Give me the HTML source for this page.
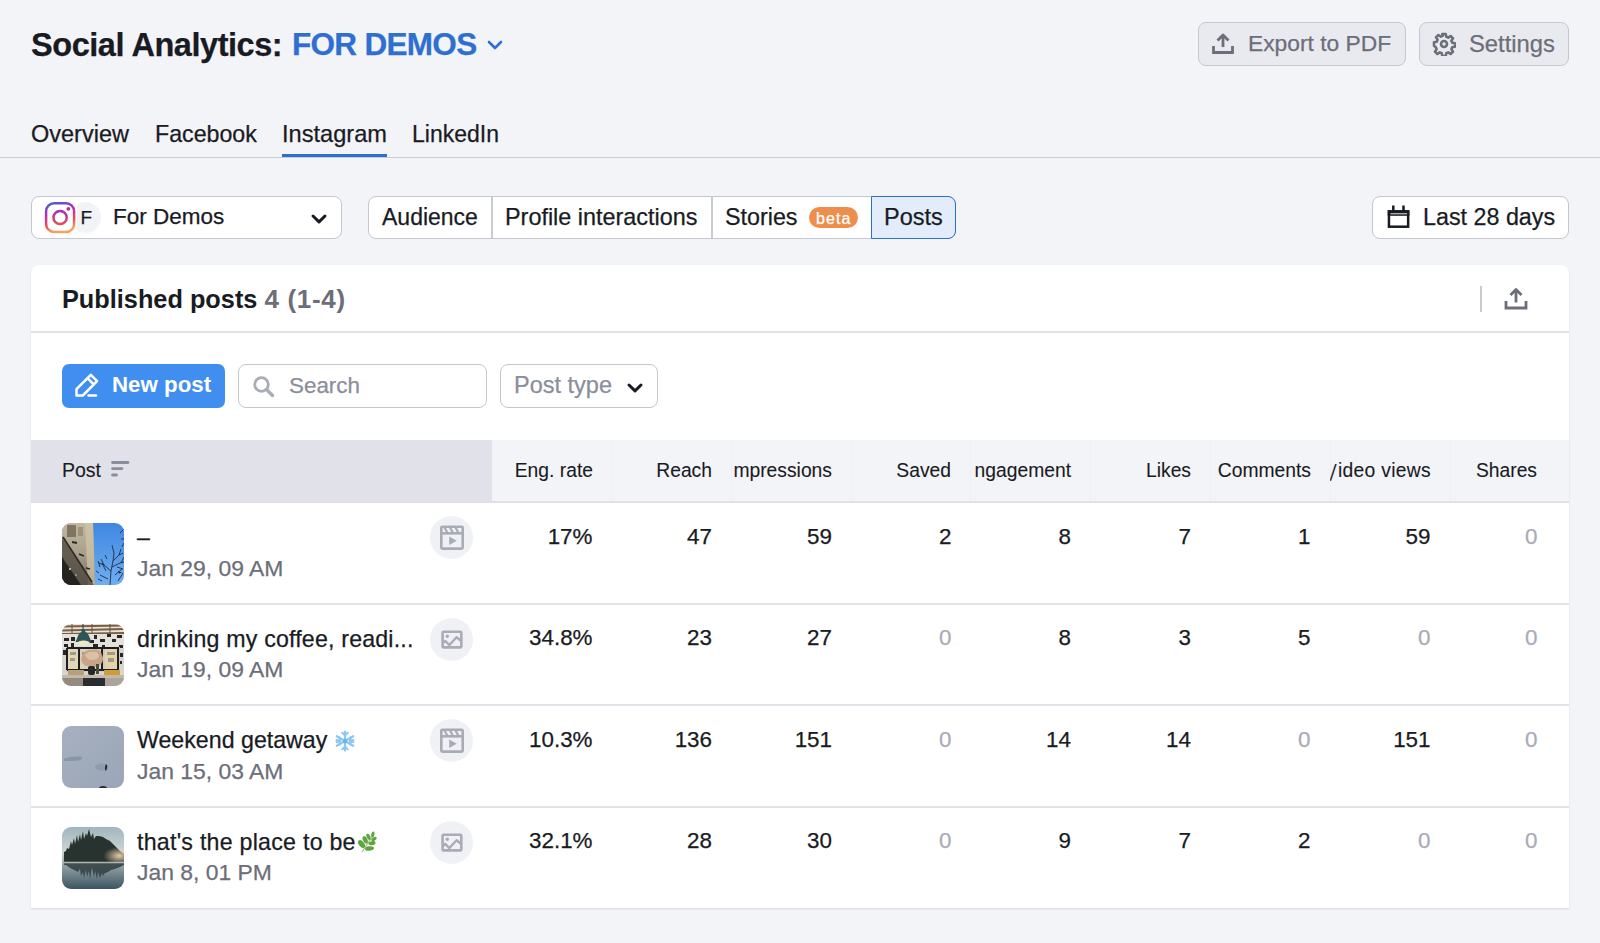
<!DOCTYPE html>
<html><head><meta charset="utf-8">
<style>
*{box-sizing:border-box;margin:0;padding:0}
html,body{width:1600px;height:943px;overflow:hidden}
body{background:#f3f4f8;font-family:"Liberation Sans",sans-serif;color:#191b23;position:relative;-webkit-text-stroke:.25px currentColor}
.abs{position:absolute}
.t{position:absolute;white-space:nowrap;line-height:1}
.btn{position:absolute;border:1.5px solid #c4c7cf;border-radius:8px;background:#fff}
.gray{color:#6c6e79}
.light{color:#a9abb6}
.hdrline{position:absolute;left:0;top:156.5px;width:1600px;height:1.5px;background:#c9cbd3}
.card{position:absolute;left:31px;top:265px;width:1538px;height:643px;background:#fff;border-radius:8px 8px 0 0;box-shadow:0 1px 2px rgba(25,27,35,.12)}
.rowline{position:absolute;left:0;width:1538px;height:2px;background:#e3e4ea}
.num{position:absolute;font-size:22.5px;line-height:1;text-align:right;white-space:nowrap}
.hcell{position:absolute;top:0;height:62px;overflow:hidden;display:flex;justify-content:flex-end;align-items:center;font-size:19.3px;white-space:nowrap;padding-top:0;-webkit-text-stroke:.1px currentColor}
.thumb{position:absolute;left:31px;width:62px;height:62px;border-radius:9px;overflow:hidden}
.ticon{position:absolute;left:399px;width:43px;height:43px;border-radius:50%;background:#f0f1f5}
</style></head><body>

<!-- Header -->
<div class="t" style="left:31px;top:28.5px;font-size:32.5px;font-weight:700;letter-spacing:-.45px">Social Analytics:</div>
<div class="t" style="left:292px;top:28.5px;font-size:31.5px;font-weight:700;color:#2f6fd0;letter-spacing:-.7px">FOR DEMOS</div>
<svg class="abs" style="left:486px;top:38px" width="18" height="14" viewBox="0 0 18 14"><path d="M3 4l6 6 6-6" fill="none" stroke="#2f6fd0" stroke-width="2.6" stroke-linecap="round" stroke-linejoin="round"/></svg>

<div class="btn" style="left:1198px;top:22px;width:208px;height:44px;background:#e9eaef;border-color:#c4c7cf"></div>
<svg class="abs" style="left:1211px;top:33px" width="24" height="22" viewBox="0 0 24 22"><path d="M12 2v12M6.5 7.5L12 2l5.5 5.5" fill="none" stroke="#6c6e79" stroke-width="2.8" stroke-linejoin="round"/><path d="M2.5 13v6.5h19V13" fill="none" stroke="#6c6e79" stroke-width="2.8"/></svg>
<div class="t gray" style="left:1248px;top:32px;font-size:22.8px">Export to PDF</div>

<div class="btn" style="left:1419px;top:22px;width:150px;height:44px;background:#e9eaef;border-color:#c4c7cf"></div>
<svg class="abs" style="left:1432px;top:32px" width="24" height="24" viewBox="0 0 24 24"><path d="M10.3 2h3.4l.6 2.8 1.9.8 2.4-1.6 2.4 2.4-1.6 2.4.8 1.9 2.8.6v3.4l-2.8.6-.8 1.9 1.6 2.4-2.4 2.4-2.4-1.6-1.9.8-.6 2.8h-3.4l-.6-2.8-1.9-.8-2.4 1.6-2.4-2.4 1.6-2.4-.8-1.9L2 13.7v-3.4l2.8-.6.8-1.9L4 5.4 6.4 3l2.4 1.6 1.9-.8z" fill="none" stroke="#6c6e79" stroke-width="2.6" stroke-linejoin="round"/><circle cx="12" cy="12" r="3" fill="none" stroke="#6c6e79" stroke-width="2.6"/></svg>
<div class="t gray" style="left:1469px;top:32px;font-size:23.8px">Settings</div>

<!-- Tabs -->
<div class="t" style="left:31px;top:123px;font-size:23.5px">Overview</div>
<div class="t" style="left:155px;top:123px;font-size:23.2px">Facebook</div>
<div class="t" style="left:282px;top:123px;font-size:23.6px">Instagram</div>
<div class="t" style="left:412px;top:123px;font-size:23px">LinkedIn</div>
<div class="abs" style="left:282px;top:153.5px;width:105px;height:4px;background:#2b6fcf"></div>
<div class="hdrline"></div>

<!-- Filter row -->
<div class="btn" style="left:31px;top:196px;width:311px;height:43px"></div>
<div class="abs" style="left:69.5px;top:202px;width:31px;height:31px;border-radius:50%;background:#f2f3f7"></div>
<svg class="abs" style="left:43px;top:200px" width="34" height="36" viewBox="0 0 34 36"><defs><linearGradient id="ig" x1=".35" y1="1" x2=".1" y2="0"><stop offset="0" stop-color="#f5a25a"/><stop offset=".3" stop-color="#e4485e"/><stop offset=".65" stop-color="#b42fb8"/><stop offset="1" stop-color="#4d5ad6"/></linearGradient><linearGradient id="ig2" x1="0" y1="1" x2="0" y2="0"><stop offset="0" stop-color="#e24a58"/><stop offset="1" stop-color="#a62ec0"/></linearGradient></defs><rect x="0" y="0" width="34" height="36" fill="#fff"/><rect x="3.1" y="3.3" width="28" height="28.6" rx="8" fill="none" stroke="url(#ig)" stroke-width="2.5"/><circle cx="17.1" cy="17.5" r="6.6" fill="none" stroke="url(#ig2)" stroke-width="2.5"/><circle cx="25.4" cy="8.8" r="1.9" fill="#a42fbf"/></svg>
<div class="t" style="left:80.5px;top:207.5px;font-size:19px;color:#191b23">F</div>
<div class="t" style="left:113px;top:206px;font-size:22.5px">For Demos</div>
<svg class="abs" style="left:309px;top:211px" width="20" height="14" viewBox="0 0 20 14"><path d="M4 5l6 5.8L16 5" fill="none" stroke="#191b23" stroke-width="3" stroke-linecap="round" stroke-linejoin="round"/></svg>

<div class="btn" style="left:368px;top:196px;width:588px;height:43px"></div>
<div class="abs" style="left:491px;top:197px;width:1.5px;height:41px;background:#c9cbd2"></div>
<div class="abs" style="left:711px;top:197px;width:1.5px;height:41px;background:#c9cbd2"></div>
<div class="abs" style="left:871px;top:196px;width:85px;height:43px;background:#e3ecfb;border:1.5px solid #2b6fcf;border-radius:0 8px 8px 0"></div>
<div class="t" style="left:382px;top:206px;font-size:23px">Audience</div>
<div class="t" style="left:505px;top:206px;font-size:23.4px">Profile interactions</div>
<div class="t" style="left:725px;top:206px;font-size:23.3px">Stories</div>
<div class="abs" style="left:809px;top:207px;width:49px;height:21px;border-radius:10.5px;background:#ee8e4c"></div>
<div class="t" style="left:816px;top:210.5px;font-size:16px;color:#fff;letter-spacing:1.1px">beta</div>
<div class="t" style="left:884px;top:206px;font-size:23.5px">Posts</div>

<div class="btn" style="left:1372px;top:196px;width:197px;height:43px"></div>
<svg class="abs" style="left:1386px;top:204px" width="26" height="26" viewBox="0 0 26 26"><path d="M2.95 8h19.2v19" fill="none"/><rect x="2.95" y="7.45" width="19.2" height="15.25" fill="none" stroke="#191b23" stroke-width="2.5"/><rect x="1.7" y="6.2" width="21.7" height="5.6" fill="#191b23"/><path d="M4.5 9.8h16.6" stroke="#fff" stroke-width=".9"/><path d="M7.3 1.5v6M17.5 1.5v6" stroke="#191b23" stroke-width="2.5"/></svg>
<div class="t" style="left:1423px;top:206px;font-size:23.3px">Last 28 days</div>

<!-- Card -->
<div class="card">
  <div class="t" style="left:31px;top:21px;font-size:25.3px;font-weight:700;-webkit-text-stroke:0">Published posts <span style="color:#6c6e79;font-size:26px;letter-spacing:.7px">4 (1-4)</span></div>
  <div class="abs" style="left:1449px;top:21px;width:2px;height:26px;background:#c9cbd2"></div>
  <svg class="abs" style="left:1472px;top:22px" width="26" height="24" viewBox="0 0 26 24"><path d="M13 2.5v13M7.5 8L13 2.5 18.5 8" fill="none" stroke="#6c6e79" stroke-width="2.8" stroke-linejoin="round"/><path d="M3 14v7h20v-7" fill="none" stroke="#6c6e79" stroke-width="2.8"/></svg>
  <div class="rowline" style="top:66px;height:1.5px;background:#e0e1e8"></div>

  <!-- toolbar -->
  <div class="abs" style="left:31px;top:99px;width:163px;height:44px;border-radius:7px;background:#408ef0"></div>
  <svg class="abs" style="left:43px;top:106px" width="28" height="28" viewBox="0 0 28 28"><path d="M2.5 24.5v-6.3L16.8 3.9l6.3 6.3L8.8 24.5z" fill="none" stroke="#fff" stroke-width="2.5" stroke-linejoin="round"/><path d="M13.5 7.2l6.3 6.3" stroke="#fff" stroke-width="2.5"/><path d="M14.5 24.5h7.5" stroke="#fff" stroke-width="2.5" stroke-linecap="round"/></svg>
  <div class="t" style="left:81px;top:109px;font-size:22.3px;font-weight:700;color:#fff;-webkit-text-stroke:0">New post</div>

  <div class="btn" style="left:207px;top:99px;width:249px;height:44px"></div>
  <svg class="abs" style="left:220px;top:109px" width="26" height="26" viewBox="0 0 26 26"><circle cx="10.5" cy="10.5" r="6.8" fill="none" stroke="#a9abb6" stroke-width="2.8"/><path d="M15.5 15.5l6 6" stroke="#a9abb6" stroke-width="3.2" stroke-linecap="round"/></svg>
  <div class="t light" style="left:258px;top:110px;font-size:22.4px;color:#8a8e9b">Search</div>

  <div class="btn" style="left:469px;top:99px;width:158px;height:44px"></div>
  <div class="t" style="left:483px;top:109px;font-size:23.5px;color:#8a8e9b">Post type</div>
  <svg class="abs" style="left:594px;top:115px" width="20" height="14" viewBox="0 0 20 14"><path d="M4 5l6 5.8L16 5" fill="none" stroke="#191b23" stroke-width="3" stroke-linecap="round" stroke-linejoin="round"/></svg>

  <!-- table header -->
  <div class="abs" style="left:0;top:175px;width:1538px;height:62px;background:#f3f4f8">
    <div class="abs" style="left:0;top:0;width:461px;height:62px;background:#e1e2e9"></div>
    <div class="t" style="left:31px;top:21px;font-size:19.5px;-webkit-text-stroke:.1px currentColor">Post</div>
    <svg class="abs" style="left:78px;top:19px" width="22" height="20" viewBox="0 0 22 20"><path d="M3.5 3.5h15.5M3.5 9.6h9.5M3.5 16h4" stroke="#8a8e9b" stroke-width="2.8" stroke-linecap="round"/></svg>
    <div class="abs" style="left:581px;top:0;width:1px;height:61px;background:#eef0f3"></div><div class="abs" style="left:700px;top:0;width:1px;height:61px;background:#eef0f3"></div><div class="abs" style="left:820px;top:0;width:1px;height:61px;background:#eef0f3"></div><div class="abs" style="left:939px;top:0;width:1px;height:61px;background:#eef0f3"></div><div class="abs" style="left:1059px;top:0;width:1px;height:61px;background:#eef0f3"></div><div class="abs" style="left:1179px;top:0;width:1px;height:61px;background:#eef0f3"></div><div class="abs" style="left:1299px;top:0;width:1px;height:61px;background:#eef0f3"></div><div class="abs" style="left:1419px;top:0;width:1px;height:61px;background:#eef0f3"></div>
    <div class="hcell" style="left:461px;width:120px;padding-right:19px">Eng. rate</div>
    <div class="hcell" style="left:581px;width:119px;padding-right:19px">Reach</div>
    <div class="hcell" style="left:700px;width:120px;padding-right:19px">mpressions</div>
    <div class="hcell" style="left:820px;width:119px;padding-right:19px">Saved</div>
    <div class="hcell" style="left:939px;width:120px;padding-right:19px">ngagement</div>
    <div class="hcell" style="left:1059px;width:120px;padding-right:19px">Likes</div>
    <div class="hcell" style="left:1179px;width:120px;padding-right:19px">Comments</div>
    <div class="hcell" style="left:1299px;width:120px;padding-right:19px;letter-spacing:.3px"><span style="display:inline-block;transform:skewX(-18deg);font-size:18px;margin-right:2px">|</span>ideo views</div>
    <div class="hcell" style="left:1419px;width:119px;padding-right:32px">Shares</div>
    <div class="rowline" style="top:61px;height:1.5px;background:#e0e1e8"></div>
  </div>

  <!-- rows -->
  <div id="rows">
<div class="abs" style="left:0;top:238px;width:1538px;height:101.5px">
<div class="thumb" style="top:19.5px"><svg width="62" height="62" viewBox="0 0 62 62">
<defs><linearGradient id="sky1" x1="0" y1="0" x2="0" y2="1"><stop offset="0" stop-color="#3f87e2"/><stop offset="1" stop-color="#70aef0"/></linearGradient>
<linearGradient id="bld1" x1="0" y1="0" x2="0" y2="1"><stop offset="0" stop-color="#c2b8a6"/><stop offset=".5" stop-color="#a89e8c"/><stop offset="1" stop-color="#6f685c"/></linearGradient></defs>
<rect width="62" height="62" fill="url(#sky1)"/>
<g stroke="#1f2c48" stroke-width="1" fill="none" opacity=".9">
<path d="M48 62l1-14 2-10 1-8M49 48l-7-6-5-2M51 38l6-6 4-2M52 30l-2-8M50 44l8-4 4-1M46 56l-8-4M53 52l7-6M57 32l2-6M42 42l-3-6M59 40l3-6M60 24l2-4M37 50l-3-2M56 58l5-8M45 36l-2-4M58 10l4-4M59 16l3 0M40 58l-4-2M44 48l-4-8M55 44l6 2M38 44l-2-6"/>
</g>
<path d="M56 48l4 1.5-3 1z" fill="#1a2030"/>
<path d="M0 0h31l1 30 1 32H0z" fill="url(#bld1)"/>
<path d="M23 0h8l1 30 1 32h-7z" fill="#d0c4a6" opacity=".75"/>
<path d="M5 2h9v12H5z" fill="#6e604c" opacity=".75"/>
<path d="M16 4h5v9h-5z" fill="#8b7d66" opacity=".6"/>
<path d="M0 14l32 48H0z" fill="#524c43" opacity=".8"/>
<path d="M0 34l19 28H0z" fill="#25231f"/>
<path d="M1 14l29 45" stroke="#2c2924" stroke-width="1.6"/>
<path d="M10 19l5 1M17 31l5 2M24 45l4 1" stroke="#2e2a25" stroke-width="1.8"/>
<circle cx="8" cy="46" r="1" fill="#ddd"/><circle cx="14" cy="52" r=".8" fill="#ccc"/>
</svg></div>
<div class="t" style="left:106px;top:23px;font-size:23.2px">–</div>
<div class="t gray" style="left:106px;top:53.5px;font-size:22.9px">Jan 29, 09 AM</div>
<div class="ticon" style="top:13px"><div class="abs" style="left:9px;top:9px"><svg width="26" height="26" viewBox="0 0 26 26"><rect x="2.3" y="1.7" width="21.4" height="21.9" rx="1" fill="none" stroke="#a9abb6" stroke-width="2.6"/><path d="M2.3 8.3h21.4" stroke="#a9abb6" stroke-width="2.6"/><path d="M5.5 2.5l2.8 5M11 2.5l2.8 5M16.5 2.5l2.8 5" stroke="#a9abb6" stroke-width="2.2"/><path d="M10.2 11.5v8.5l7.6-4.25z" fill="#a9abb6"/></svg></div></div>
<div class="num" style="left:451.5px;top:22.5px;width:110px;font-size:22.4px;color:#191b23">17%</div>
<div class="num" style="left:571px;top:22.5px;width:110px;font-size:22.4px;color:#191b23">47</div>
<div class="num" style="left:691px;top:22.5px;width:110px;font-size:22.4px;color:#191b23">59</div>
<div class="num" style="left:810.5px;top:22.5px;width:110px;font-size:22.4px;color:#191b23">2</div>
<div class="num" style="left:930px;top:22.5px;width:110px;font-size:22.4px;color:#191b23">8</div>
<div class="num" style="left:1050px;top:22.5px;width:110px;font-size:22.4px;color:#191b23">7</div>
<div class="num" style="left:1169.5px;top:22.5px;width:110px;font-size:22.4px;color:#191b23">1</div>
<div class="num" style="left:1289.5px;top:22.5px;width:110px;font-size:22.4px;color:#191b23">59</div>
<div class="num" style="left:1396.5px;top:22.5px;width:110px;font-size:22.4px;color:#a9abb6">0</div>
<div class="rowline" style="top:99.5px;height:2px"></div>
</div>
<div class="abs" style="left:0;top:339.5px;width:1538px;height:101.5px">
<div class="thumb" style="top:19.5px"><svg width="62" height="62" viewBox="0 0 62 62">
<rect width="62" height="62" fill="#d8d5cf"/>
<rect y="0" width="62" height="10" fill="#e8e4dc"/>
<path d="M0 2.5l62-1M0 6.5l62-1.5M0 10l62-1" stroke="#7a5f42" stroke-width="1.8"/>
<path d="M10 0v10M30 0v10M48 0v10" stroke="#6d563c" stroke-width="1"/>
<rect y="10" width="62" height="14" fill="#e4e1db"/>
<g fill="#262626"><rect x="2" y="14" width="5" height="3"/><rect x="9" y="13" width="4" height="4"/><rect x="27" y="16" width="5" height="3"/><rect x="32" y="11" width="3" height="4"/><rect x="38" y="15" width="5" height="3"/><rect x="45" y="10" width="4" height="3"/><rect x="50" y="15" width="4" height="3"/><rect x="55" y="11" width="5" height="3"/><rect x="2" y="20" width="4" height="3"/><rect x="9" y="19" width="3" height="4"/><rect x="31" y="20" width="5" height="3"/><rect x="40" y="21" width="3" height="3"/><rect x="57" y="21" width="4" height="3"/><rect x="1" y="26" width="3" height="5"/><rect x="58" y="29" width="3" height="4"/><rect x="57" y="37" width="3" height="3"/></g>
<path d="M21 0v6" stroke="#333" stroke-width="1"/>
<path d="M19.5 5h3l1 3c2 1 3 2 3.5 4l2.5 6H13.5l2.5-6c.5-2 1.5-3 3.5-4z" fill="#2d5658"/>
<ellipse cx="21.5" cy="18.8" rx="6.2" ry="2.2" fill="#f1eac0"/>
<rect x="4" y="23" width="54" height="25" fill="#cfcbc0"/>
<rect x="6" y="25" width="10" height="20" fill="#e0d6b8"/>
<rect x="18" y="25" width="21" height="20" fill="#d9d1bd"/>
<rect x="43" y="25" width="12" height="20" fill="#e2d5ae"/>
<g fill="#7d7462" opacity=".6"><rect x="8" y="28" width="6" height="3"/><rect x="8" y="34" width="5" height="3"/><rect x="20" y="28" width="6" height="3"/><rect x="45" y="28" width="8" height="3"/><rect x="46" y="34" width="6" height="4"/></g>
<path d="M5 24v22M17 24v22M40 23v23M56 23v23M5 46h52M5 24h52" stroke="#1d1e22" stroke-width="2" fill="none"/>
<path d="M20 32c2-5 6-7 10-6 4-2 9 0 10 5 2 3 1 8-2 10-3 2-7 2-9 1-4 1-8-1-9-4-1-2-1-4 0-6z" fill="#c7a586"/>
<path d="M23 31c2-3 5-4 8-3 3-1 6 1 6 4-1 3-4 4-7 4-3 0-6-2-7-5z" fill="#dbc1a3"/>
<rect x="26" y="42" width="7" height="9" rx="2" fill="#26272b"/>
<rect x="34" y="40" width="3" height="10" fill="#4a4a3a"/>
<rect x="6" y="46" width="16" height="6" fill="#b9a079"/>
<rect x="42" y="46" width="16" height="6" fill="#cf9c3c"/>
<rect x="0" y="51" width="62" height="3" fill="#c2b9a6"/>
<rect x="21" y="54" width="22" height="8" fill="#2b2c2f"/>
<rect x="0" y="54" width="21" height="8" fill="#938c7e"/>
<rect x="43" y="54" width="19" height="8" fill="#a9a59c"/>
</svg></div>
<div class="t" style="left:106px;top:23px;font-size:23.2px;letter-spacing:.18px">drinking my coffee, readi...</div>
<div class="t gray" style="left:106px;top:53.5px;font-size:22.9px">Jan 19, 09 AM</div>
<div class="ticon" style="top:13px"><div class="abs" style="left:9px;top:9px"><svg width="26" height="26" viewBox="0 0 26 26"><rect x="3.6" y="4.8" width="18.7" height="15.6" rx="1" fill="none" stroke="#a9abb6" stroke-width="2.6"/><circle cx="8.3" cy="9.3" r="1.7" fill="#a9abb6"/><path d="M3.8 16l2.6-2 4 4.2M9.5 19l8-8.8 4.5 3.6" fill="none" stroke="#a9abb6" stroke-width="2.4" stroke-linejoin="round"/></svg></div></div>
<div class="num" style="left:451.5px;top:22.5px;width:110px;font-size:22.4px;color:#191b23">34.8%</div>
<div class="num" style="left:571px;top:22.5px;width:110px;font-size:22.4px;color:#191b23">23</div>
<div class="num" style="left:691px;top:22.5px;width:110px;font-size:22.4px;color:#191b23">27</div>
<div class="num" style="left:810.5px;top:22.5px;width:110px;font-size:22.4px;color:#a9abb6">0</div>
<div class="num" style="left:930px;top:22.5px;width:110px;font-size:22.4px;color:#191b23">8</div>
<div class="num" style="left:1050px;top:22.5px;width:110px;font-size:22.4px;color:#191b23">3</div>
<div class="num" style="left:1169.5px;top:22.5px;width:110px;font-size:22.4px;color:#191b23">5</div>
<div class="num" style="left:1289.5px;top:22.5px;width:110px;font-size:22.4px;color:#a9abb6">0</div>
<div class="num" style="left:1396.5px;top:22.5px;width:110px;font-size:22.4px;color:#a9abb6">0</div>
<div class="rowline" style="top:99.5px;height:2px"></div>
</div>
<div class="abs" style="left:0;top:441px;width:1538px;height:101.5px">
<div class="thumb" style="top:19.5px"><svg width="62" height="62" viewBox="0 0 62 62">
<defs><linearGradient id="sn" x1="0" y1="0" x2="1" y2="1"><stop offset="0" stop-color="#a6b0c0"/><stop offset="1" stop-color="#9aa5b7"/></linearGradient></defs>
<rect width="62" height="62" fill="url(#sn)"/>
<path d="M2 33c4-2 14-3 18-2l-1 3c-5 1-12 1-17 1z" fill="#7f8ba0" opacity=".7"/>
<ellipse cx="40" cy="41" rx="7" ry="3.5" fill="#8592a8" opacity=".6"/>
<path d="M43.5 39c1-1 2 0 1.5 2l-.5 3-1 1-.5-3z" fill="#1e2024"/>
<ellipse cx="41" cy="62.5" rx="4" ry="2.6" fill="#2b2a22"/>
</svg></div>
<div class="t" style="left:106px;top:23px;font-size:23.2px">Weekend getaway<span style="display:inline-block;width:22px;position:relative;margin-left:7px"><svg style="position:absolute;left:0;top:-18px" width="22" height="22" viewBox="0 0 22 22"><g stroke="#8cc7f2" stroke-width="2.2" stroke-linecap="round" fill="none"><path d="M11 1.5v19M2.8 6.25l16.4 9.5M2.8 15.75l16.4-9.5"/><path d="M8.3 2.8L11 5.2l2.7-2.4M8.3 19.2L11 16.8l2.7 2.4M2.6 10l3.4 1.2-.7 3.5M19.4 10l-3.4 1.2.7 3.5M2.6 12l3.4-1-.7-3.5M19.4 12l-3.4-1 .7-3.5"/></g><circle cx="11" cy="11" r="2.2" fill="#6fb3ea"/></svg></span></div>
<div class="t gray" style="left:106px;top:53.5px;font-size:22.9px">Jan 15, 03 AM</div>
<div class="ticon" style="top:13px"><div class="abs" style="left:9px;top:9px"><svg width="26" height="26" viewBox="0 0 26 26"><rect x="2.3" y="1.7" width="21.4" height="21.9" rx="1" fill="none" stroke="#a9abb6" stroke-width="2.6"/><path d="M2.3 8.3h21.4" stroke="#a9abb6" stroke-width="2.6"/><path d="M5.5 2.5l2.8 5M11 2.5l2.8 5M16.5 2.5l2.8 5" stroke="#a9abb6" stroke-width="2.2"/><path d="M10.2 11.5v8.5l7.6-4.25z" fill="#a9abb6"/></svg></div></div>
<div class="num" style="left:451.5px;top:22.5px;width:110px;font-size:22.4px;color:#191b23">10.3%</div>
<div class="num" style="left:571px;top:22.5px;width:110px;font-size:22.4px;color:#191b23">136</div>
<div class="num" style="left:691px;top:22.5px;width:110px;font-size:22.4px;color:#191b23">151</div>
<div class="num" style="left:810.5px;top:22.5px;width:110px;font-size:22.4px;color:#a9abb6">0</div>
<div class="num" style="left:930px;top:22.5px;width:110px;font-size:22.4px;color:#191b23">14</div>
<div class="num" style="left:1050px;top:22.5px;width:110px;font-size:22.4px;color:#191b23">14</div>
<div class="num" style="left:1169.5px;top:22.5px;width:110px;font-size:22.4px;color:#a9abb6">0</div>
<div class="num" style="left:1289.5px;top:22.5px;width:110px;font-size:22.4px;color:#191b23">151</div>
<div class="num" style="left:1396.5px;top:22.5px;width:110px;font-size:22.4px;color:#a9abb6">0</div>
<div class="rowline" style="top:99.5px;height:2px"></div>
</div>
<div class="abs" style="left:0;top:542.5px;width:1538px;height:101.5px">
<div class="thumb" style="top:19.5px"><svg width="62" height="62" viewBox="0 0 62 62">
<defs><linearGradient id="lk" x1="0" y1="0" x2="0" y2="1"><stop offset="0" stop-color="#a0b6bd"/><stop offset=".4" stop-color="#ccd4d5"/><stop offset=".58" stop-color="#9eabae"/><stop offset="1" stop-color="#3b5460"/></linearGradient>
<radialGradient id="mist" cx=".85" cy=".6" r=".5"><stop offset="0" stop-color="#f0d2ae" stop-opacity=".95"/><stop offset="1" stop-color="#e8cfb2" stop-opacity="0"/></radialGradient></defs>
<rect width="62" height="62" fill="url(#lk)"/>
<path d="M2 35 L2 25 L4 24 L5 21 L7 22 L9 14 L10 18 L12 11 L13 17 L15 8 L16 15 L18 7 L19 13 L21 4 L22 12 L24 6 L25 9 L27 2 L29 10 L31 6 L32 12 L34 9 L37 9 L41 10 L44 12 L48 14 L51 17 L54 20 L58 24 L62 27 L62 35Z" fill="#28322e"/>
<rect x="30" y="18" width="32" height="18" fill="url(#mist)"/>
<path d="M2 36 L62 36 L62 38 L58 40 L53 42 L49 43 L46 45 L43 46 L41 49 L40 46 L38 51 L36 45 L35 52 L33 44 L32 50 L30 41 L28 52 L27 44 L25 50 L24 43 L22 51 L21 45 L19 49 L18 42 L16 45 L12 43 L8 41 L4 38 L2 38Z" fill="#2e3b3c" opacity=".82"/>
<rect x="0" y="34.5" width="62" height="2" fill="#b9bdb6" opacity=".5"/>
</svg></div>
<div class="t" style="left:106px;top:23px;font-size:23.2px;letter-spacing:.25px">that's the place to be<span style="display:inline-block;width:22px;position:relative;margin-left:1px"><svg style="position:absolute;left:0;top:-19px" width="22" height="22" viewBox="0 0 22 22"><path d="M5 21L17 3" stroke="#9cc48a" stroke-width="1.3"/><g fill="#5fa540"><ellipse cx="4.5" cy="13" rx="2.6" ry="4.5" transform="rotate(-40 4.5 13)"/><ellipse cx="12.5" cy="17.5" rx="4.5" ry="2.3" transform="rotate(-5 12.5 17.5)"/><ellipse cx="8.2" cy="8.8" rx="2.2" ry="4" transform="rotate(-25 8.2 8.8)"/><ellipse cx="15" cy="12.2" rx="3.6" ry="2" transform="rotate(-10 15 12.2)"/><ellipse cx="11.5" cy="5.8" rx="1.8" ry="3.3" transform="rotate(-25 11.5 5.8)"/><ellipse cx="17" cy="8" rx="3" ry="1.7" transform="rotate(-30 17 8)"/><ellipse cx="15.8" cy="3.5" rx="1.6" ry="3" transform="rotate(15 15.8 3.5)"/></g></svg></span></div>
<div class="t gray" style="left:106px;top:53.5px;font-size:22.9px">Jan 8, 01 PM</div>
<div class="ticon" style="top:13px"><div class="abs" style="left:9px;top:9px"><svg width="26" height="26" viewBox="0 0 26 26"><rect x="3.6" y="4.8" width="18.7" height="15.6" rx="1" fill="none" stroke="#a9abb6" stroke-width="2.6"/><circle cx="8.3" cy="9.3" r="1.7" fill="#a9abb6"/><path d="M3.8 16l2.6-2 4 4.2M9.5 19l8-8.8 4.5 3.6" fill="none" stroke="#a9abb6" stroke-width="2.4" stroke-linejoin="round"/></svg></div></div>
<div class="num" style="left:451.5px;top:22.5px;width:110px;font-size:22.4px;color:#191b23">32.1%</div>
<div class="num" style="left:571px;top:22.5px;width:110px;font-size:22.4px;color:#191b23">28</div>
<div class="num" style="left:691px;top:22.5px;width:110px;font-size:22.4px;color:#191b23">30</div>
<div class="num" style="left:810.5px;top:22.5px;width:110px;font-size:22.4px;color:#a9abb6">0</div>
<div class="num" style="left:930px;top:22.5px;width:110px;font-size:22.4px;color:#191b23">9</div>
<div class="num" style="left:1050px;top:22.5px;width:110px;font-size:22.4px;color:#191b23">7</div>
<div class="num" style="left:1169.5px;top:22.5px;width:110px;font-size:22.4px;color:#191b23">2</div>
<div class="num" style="left:1289.5px;top:22.5px;width:110px;font-size:22.4px;color:#a9abb6">0</div>
<div class="num" style="left:1396.5px;top:22.5px;width:110px;font-size:22.4px;color:#a9abb6">0</div>
</div>
</div><!--/rows-->
</div>

</body></html>
